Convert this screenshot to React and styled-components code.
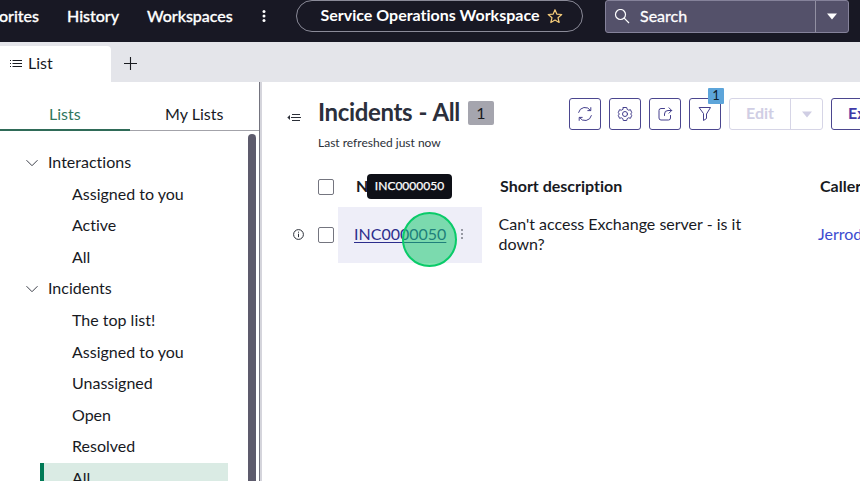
import React from "react";
import styled, { createGlobalStyle } from "styled-components";

const GlobalStyle = createGlobalStyle`
  * { box-sizing: border-box; }
  html, body { margin: 0; padding: 0; overflow: hidden; }
  body { font-family: Lato, "Liberation Sans", sans-serif; font-size: 16px; font-variant-ligatures: none; color: #181a1f; background: #fff; }
  button { font: inherit; color: inherit; padding: 0; background: none; border: 0; }
  svg { display: block; flex: none; }
`;

const Text = styled.span`
  white-space: nowrap;
  letter-spacing: ${(p) => p.$track || 0}px;
  word-spacing: ${(p) => p.$words || 0}px;
  padding-bottom: ${(p) => (p.$lift === undefined ? 2 : p.$lift)}px;
`;

const Page = styled.div`
  width: 860px;
  height: 481px;
  display: flex;
  flex-direction: column;
  overflow: hidden;
`;

const TopBar = styled.header`
  height: 42px;
  flex: none;
  display: flex;
  align-items: flex-start;
  background: #181824;
  color: #fff;
`;

const Nav = styled.nav`
  width: 296px;
  height: 32px;
  flex: none;
  display: flex;
  align-items: center;
  font-weight: 500;
  -webkit-text-stroke: 0.3px #fff;
`;

const NavItem = styled.a`
  width: ${(p) => p.$width}px;
  flex: none;
  display: flex;
  justify-content: ${(p) => p.$align || "flex-start"};
  line-height: 20px;
  margin-right: ${(p) => p.$gap}px;
`;

const Pill = styled.div`
  width: 287px;
  height: 32px;
  flex: none;
  display: flex;
  align-items: center;
  gap: 7px;
  padding: 0 0 1px 23.5px;
  border: 1px solid #8a8a98;
  border-radius: 16px;
  font-weight: 700;
`;

const SearchBox = styled.div`
  width: 244px;
  height: 33px;
  flex: none;
  margin-left: 22px;
  display: flex;
  align-items: stretch;
  border: 1px solid #85829a;
  border-radius: 3px;
  background: #54516a;
`;

const SearchField = styled.div`
  flex: 1;
  display: flex;
  align-items: center;
  gap: 10px;
  padding-left: 8px;
  -webkit-text-stroke: 0.3px #fff;
`;

const SearchToggle = styled.button`
  width: 33px;
  display: grid;
  place-items: center;
  border-left: 1px solid #9290a2;
`;

const TabStrip = styled.div`
  height: 40px;
  flex: none;
  display: flex;
  align-items: flex-end;
  background: #e4e5ea;
`;

const PageTab = styled.div`
  width: 111px;
  height: 36px;
  display: flex;
  align-items: center;
  gap: 6px;
  padding: 0 0 1px 10px;
  background: #fff;
  border-radius: 0 4px 0 0;
`;

const AddTab = styled.button`
  width: 39px;
  height: 35px;
  margin-bottom: 1px;
  display: grid;
  place-items: center;
`;

const Body = styled.div`
  flex: 1;
  min-height: 0;
  display: flex;
`;

const Sidebar = styled.aside`
  width: 262px;
  flex: none;
  display: flex;
  flex-direction: column;
  border-right: 2px solid #d5d5dc;
  box-shadow: inset -1px 0 #74747f;
`;

const ListTabs = styled.div`
  height: 49px;
  flex: none;
  display: flex;
  padding-right: 1px;
`;

const ListTab = styled.div`
  width: 130px;
  display: flex;
  align-items: flex-end;
  justify-content: center;
  padding-bottom: ${(p) => (p.$active ? 5 : 6)}px;
  line-height: 20px;
  color: ${(p) => (p.$active ? "#2f775e" : "#181a1f")};
  border-bottom: ${(p) => (p.$active ? "2px solid #2f6b58" : "1px solid #a3a3aa")};
`;

const ScrollArea = styled.div`
  flex: 1;
  min-height: 0;
  display: flex;
  justify-content: space-between;
  padding: 3px 4px 0 0;
`;

const Tree = styled.ul`
  width: 228px;
  margin: 0;
  padding: 13px 0 0;
  list-style: none;
`;

const Group = styled.li`
  height: 31.55px;
  display: flex;
  align-items: center;
  gap: 10px;
  padding-left: 26px;
`;

const Leaf = styled.li`
  height: 31.55px;
  margin: ${(p) => (p.$selected ? 0.6 : 0)}px 0 0 40px;
  padding: ${(p) => (p.$selected ? "0 0 1px 28px" : "0 0 0 32px")};
  display: flex;
  align-items: center;
  background: ${(p) => (p.$selected ? "#daebe4" : "transparent")};
  border-left: ${(p) => (p.$selected ? "4px solid #007a56" : "0")};
`;

const ScrollThumb = styled.div`
  width: 8px;
  height: 400px;
  border-radius: 4px;
  background: #5d5b6c;
`;

const Main = styled.main`
  flex: 1;
  min-width: 0;
  display: flex;
  flex-direction: column;
  overflow: hidden;
`;

const ListHeader = styled.div`
  height: 85px;
  flex: none;
  display: flex;
  padding: 16px 0 0 25px;
`;

const CollapseButton = styled.button`
  width: 31px;
  height: 39px;
  flex: none;
  display: flex;
  align-items: center;
`;

const TitleBlock = styled.div`
  width: 251px;
  flex: none;
`;

const TitleRow = styled.div`
  height: 30px;
  display: flex;
  align-items: center;
`;

const Title = styled.h1`
  width: 150px;
  margin: 0;
  padding-bottom: 2px;
  font-size: 24px;
  line-height: 30px;
  font-weight: 700;
  color: #2b2f3b;
`;

const Count = styled.span`
  width: 26px;
  height: 24px;
  display: grid;
  place-items: center;
  border-radius: 2px;
  background: #a5a5ae;
`;

const Refreshed = styled.div`
  margin-top: 7px;
  font-size: 12px;
  line-height: 16px;
  color: #2b2f38;
`;

const Actions = styled.div`
  height: 32px;
  flex: none;
  display: flex;
  gap: 8px;
`;

const IconButton = styled.button`
  position: relative;
  width: 32px;
  height: 32px;
  display: grid;
  place-items: center;
  border: 1px solid #4b468f;
  border-radius: 3px;
`;

const FilterBadge = styled.span`
  position: absolute;
  top: -11px;
  right: -4px;
  width: 16px;
  height: 16px;
  display: grid;
  place-items: center;
  border-radius: 1px;
  background: #5da5da;
  color: #10202c;
  font-size: 13px;
  line-height: 15px;
`;

const SplitButton = styled.div`
  width: 94px;
  height: 32px;
  display: grid;
  grid-template-columns: 60px 1fr;
  border: 1px solid #d6d5e6;
  border-radius: 3px;
  color: #d0cee4;
  font-weight: 700;
`;

const SplitPart = styled.button`
  display: grid;
  place-items: center;
  border-left: ${(p) => (p.$divided ? "1px solid #d6d5e6" : "0")};
`;

const ExportButton = styled.button`
  width: 80px;
  height: 32px;
  display: flex;
  align-items: center;
  padding-left: 16px;
  border: 1px solid #4b468f;
  border-radius: 3px;
  font-weight: 700;
  color: #403aa8;
`;

const Table = styled.div`
  display: grid;
  grid-template-columns: 56px 20px 144px 320px 80px;
  grid-template-rows: 40px 56px;
`;

const Cell = styled.div`
  position: relative;
  display: flex;
  align-items: center;
  padding-left: ${(p) => p.$inset || 0}px;
  background: ${(p) => (p.$hover ? "#eeeef8" : "transparent")};
  font-weight: ${(p) => (p.$head ? 700 : 400)};
  line-height: 20px;
`;

const Checkbox = styled.span`
  width: 16px;
  height: 16px;
  border: 1px solid #74757f;
  border-radius: 2px;
`;

const RecordLink = styled.a`
  width: 92px;
  padding-bottom: 2px;
  color: #2c2d8c;
  text-decoration: underline;
  text-decoration-thickness: 1px;
  text-underline-offset: 2px;
`;

const CallerLink = styled.a`
  color: #3c4bd0;
  padding-bottom: 2px;
`;

const RowMenu = styled.button`
  width: 32px;
  display: grid;
  place-items: center;
  padding-bottom: 2px;
`;

const InfoButton = styled.button`
  padding-bottom: 1px;
`;

const Tooltip = styled.div`
  position: absolute;
  left: 29px;
  top: 7px;
  width: 85px;
  height: 25px;
  display: grid;
  place-items: center;
  padding-bottom: 2px;
  border-radius: 4px;
  background: #0e1017;
  color: #fff;
  font-size: 12px;
  font-weight: 400;
  -webkit-text-stroke: 0.25px #fff;
`;

const ClickMarker = styled.div`
  position: absolute;
  left: 64px;
  top: 5px;
  width: 55px;
  height: 55px;
  border: 2px solid #0acb69;
  border-radius: 50%;
  background: rgba(20, 200, 108, 0.53);
`;

const Dots = ({ r = 1.5, gap = 4.5, color = "currentColor" }) => (
  <svg width="6" height="14" fill={color}>
    {[-1, 0, 1].map((n) => (
      <circle key={n} cx="3" cy={7 + n * gap} r={r} />
    ))}
  </svg>
);

const Caret = ({ color = "currentColor" }) => (
  <svg width="12" height="7" fill={color}>
    <path d="M1 .5h10L6 6.5z" />
  </svg>
);

const Chevron = () => (
  <svg width="12" height="8" fill="none" stroke="#3c3f49" strokeWidth="1">
    <path d="M.5 1.2 6 6.7l5.500-5.500" />
  </svg>
);

const Star = () => (
  <svg width="16" height="16" fill="none" stroke="#f6cd7a" strokeWidth="1.2" strokeLinejoin="round">
    <path d="m8 1.700 1.800 4.400 4.950.4-3.750 3.200 1.150 4.800L8 12 3.850 14.500 5 9.700 1.250 6.500l4.950-.4z" />
  </svg>
);

const SearchIcon = () => (
  <svg width="16" height="16" fill="none" stroke="#fff" strokeWidth="1.2">
    <circle cx="6.500" cy="5.500" r="5" />
    <path d="m10.200 9.200 4.800 4.800" />
  </svg>
);

const ListIcon = () => (
  <svg width="12" height="10" stroke="#181a1f" strokeWidth="1">
    <path d="M2.500 1.500H12M2.500 4.500H12M2.500 7.500H12M0 1.500h1M0 4.500h1M0 7.500h1" />
  </svg>
);

const PlusIcon = () => (
  <svg width="13" height="13" stroke="#181a1f" strokeWidth="1.100">
    <path d="M6.500 0v13M0 6.500h13" />
  </svg>
);

const CollapseIcon = () => (
  <svg width="14" height="9" stroke="#2b2f38" strokeWidth="1">
    <path d="M5 1.500h8M4 4.500h10M5 7.500h8" />
    <path d="M3 2v5L.3 4.500z" fill="#2b2f38" stroke="none" />
  </svg>
);

const iconStroke = { fill: "none", stroke: "#443f8d", strokeWidth: 1, strokeLinecap: "round", strokeLinejoin: "round" };

const RefreshIcon = () => (
  <svg width="16" height="16" {...iconStroke}>
    <path d="M1.600 6.400A6.600 6.600 0 0 1 13.500 4.400M14.400 9.600A6.600 6.600 0 0 1 2.500 11.600M13.800 1.600v3h-3M2.200 14.400v-3h3" />
  </svg>
);

const GearIcon = () => (
  <svg width="16" height="16" {...iconStroke}>
    <path d="M6.300 1.500h3.400l.5 1.900 1.400.8 1.900-.5 1.200 2.900-1 1.400 1 1.400-1.200 2.900-1.900-.5-1.400.8-.5 1.900H6.300l-.5-1.900-1.400-.8-1.900.5-1.200-2.900 1-1.400-1-1.400 1.200-2.900 1.900.5 1.400-.8z" />
    <circle cx="8" cy="8" r="2.500" />
  </svg>
);

const ShareIcon = () => (
  <svg width="16" height="16" {...iconStroke}>
    <path d="M7.500 2.500H4Q2 2.500 2 4.500v7.500Q2 14 4 14h7.500q2 0 2-2V9.500M7.500 9.500V8Q7.500 4.500 11 4.500h3.500M12 1.800l2.700 2.700L12 7.200" />
  </svg>
);

const FilterIcon = () => (
  <svg width="14" height="16" {...iconStroke}>
    <path d="M1.500 1.500h11L8.500 8v4.500l-3 2V8z" />
  </svg>
);

const InfoIcon = () => (
  <svg width="11" height="11" fill="none" stroke="#2b2f38" strokeWidth="1">
    <circle cx="5.500" cy="5.500" r="4.900" />
    <path d="M5.500 4.700v3.500M5.500 2.700v1" />
  </svg>
);

const groups = [
  { name: "Interactions", items: ["Assigned to you", "Active", "All"] },
  {
    name: "Incidents",
    items: ["The top list!", "Assigned to you", "Unassigned", "Open", "Resolved", "All"],
    selected: 5,
  },
];

export default function App() {
  return (
    <Page>
      <GlobalStyle />
      <TopBar>
        <Nav>
          <NavItem $width={39} $gap={28} $align="flex-end"><Text $lift={0}>orites</Text></NavItem>
          <NavItem $width={52} $gap={28}><Text $lift={0}>History</Text></NavItem>
          <NavItem $width={85} $gap={29}><Text $lift={0}>Workspaces</Text></NavItem>
          <Dots />
        </Nav>
        <Pill>
          <Text>Service Operations Workspace</Text>
          <Star />
        </Pill>
        <SearchBox>
          <SearchField><SearchIcon /><Text>Search</Text></SearchField>
          <SearchToggle><Caret color="#fff" /></SearchToggle>
        </SearchBox>
      </TopBar>
      <TabStrip>
        <PageTab><ListIcon /><Text>List</Text></PageTab>
        <AddTab><PlusIcon /></AddTab>
      </TabStrip>
      <Body>
        <Sidebar>
          <ListTabs>
            <ListTab $active>Lists</ListTab>
            <ListTab>My Lists</ListTab>
          </ListTabs>
          <ScrollArea>
            <Tree>
              {groups.map((group) => (
                <React.Fragment key={group.name}>
                  <Group><Chevron /><Text>{group.name}</Text></Group>
                  {group.items.map((item, i) => (
                    <Leaf key={item} $selected={i === group.selected}><Text>{item}</Text></Leaf>
                  ))}
                </React.Fragment>
              ))}
            </Tree>
            <ScrollThumb />
          </ScrollArea>
        </Sidebar>
        <Main>
          <ListHeader>
            <CollapseButton><CollapseIcon /></CollapseButton>
            <TitleBlock>
              <TitleRow>
                <Title><Text $track={-0.35} $words={0.7}>Incidents - All</Text></Title>
                <Count><Text>1</Text></Count>
              </TitleRow>
              <Refreshed><Text>Last refreshed just now</Text></Refreshed>
            </TitleBlock>
            <Actions>
              <IconButton><RefreshIcon /></IconButton>
              <IconButton><GearIcon /></IconButton>
              <IconButton><ShareIcon /></IconButton>
              <IconButton><FilterIcon /><FilterBadge><Text $lift={1}>1</Text></FilterBadge></IconButton>
              <SplitButton>
                <SplitPart><Text $lift={3}>Edit</Text></SplitPart>
                <SplitPart $divided><Caret /></SplitPart>
              </SplitButton>
              <ExportButton><Text $lift={3}>Export</Text></ExportButton>
            </Actions>
          </ListHeader>
          <Table>
            <Cell />
            <Cell><Checkbox /></Cell>
            <Cell $head $inset={18}>
              <Text>Number</Text>
              <Tooltip>INC0000050</Tooltip>
            </Cell>
            <Cell $head $inset={18}><Text>Short description</Text></Cell>
            <Cell $head $inset={18}><Text>Caller</Text></Cell>
            <Cell $inset={31}><InfoButton><InfoIcon /></InfoButton></Cell>
            <Cell><Checkbox /></Cell>
            <Cell $hover $inset={16}>
              <RecordLink><Text>INC0000050</Text></RecordLink>
              <RowMenu><Dots r={0.8} gap={4} color="#2b2f38" /></RowMenu>
              <ClickMarker />
            </Cell>
            <Cell $inset={16.5}>
              <Text>Can't access Exchange server - is it<br />down?</Text>
            </Cell>
            <Cell $inset={16}><CallerLink>Jerrod</CallerLink></Cell>
          </Table>
        </Main>
      </Body>
    </Page>
  );
}
